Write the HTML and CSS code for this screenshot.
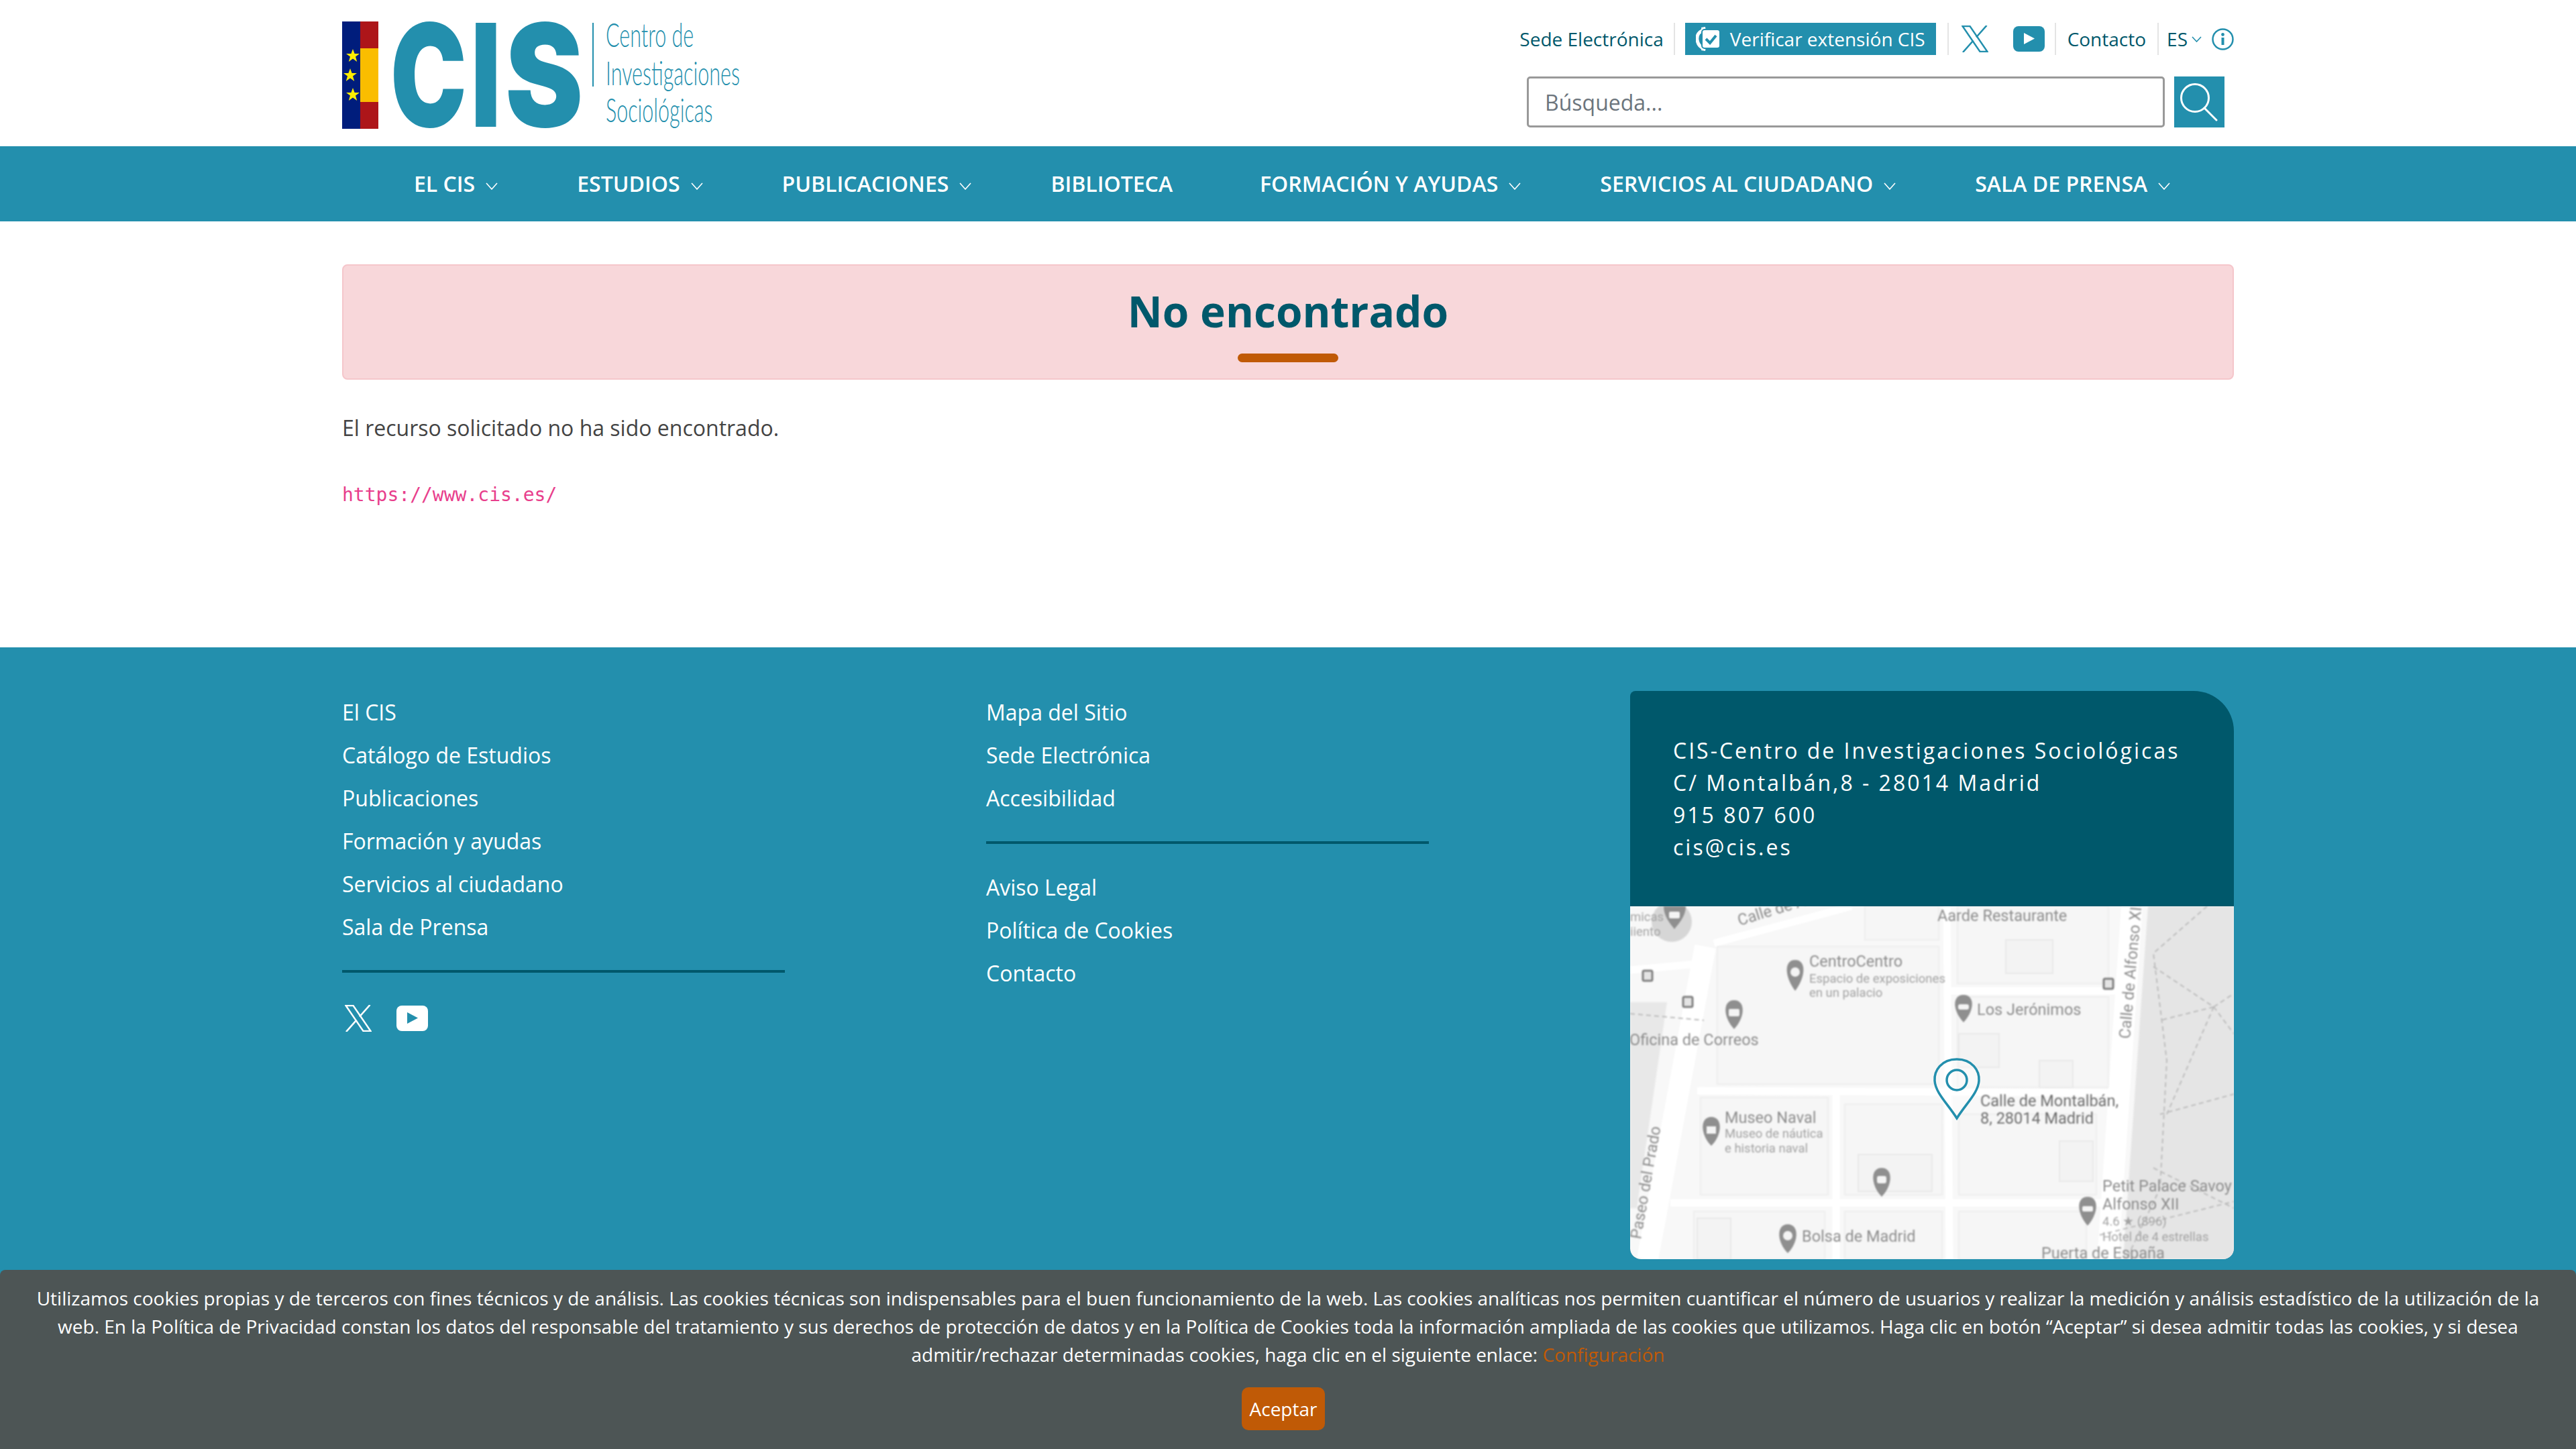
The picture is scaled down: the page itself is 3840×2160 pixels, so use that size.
FILE: index.html
```html
<!DOCTYPE html>
<html lang="es">

<head>
  <meta charset="UTF-8" />
  <title>No encontrado - CIS</title>
  <link rel="stylesheet" href="styles.css">
</head>

<body>
  <header class="top">
    <a class="logo" href="#">
      <svg width="600" height="170" viewBox="0 0 600 170">
        <rect x="0" y="0" width="27" height="160" fill="#001d7c" />
        <rect x="27" y="0" width="27" height="160" fill="#ad1519" />
        <rect x="27" y="40" width="27" height="80" fill="#fabd00" />
        <polygon fill="#ffed00" points="16,41 18.6,48 26,48 20,52.6 22.2,60 16,55.6 9.8,60 12,52.6 6,48 13.4,48" />
        <polygon fill="#ffed00" points="12,70 14.6,77 22,77 16,81.6 18.2,89 12,84.6 5.8,89 8,81.6 2,77 9.4,77" />
        <polygon fill="#ffed00" points="16,99 18.6,106 26,106 20,110.6 22.2,118 16,113.6 9.8,118 12,110.6 6,106 13.4,106" />
        <g class="logo-big">
          <text transform="translate(72 157) scale(0.715 1)">C</text>
          <text transform="translate(192 157) scale(0.72 1)">I</text>
          <text transform="translate(243 157) scale(0.82 1)">S</text>
        </g>
        <rect x="373" y="2" width="2" height="95" fill="#238fad" />
        <g class="logo-name">
          <text transform="translate(393 38) scale(0.61 1)">Centro de</text>
          <text transform="translate(393 95) scale(0.61 1)">Investigaciones</text>
          <text transform="translate(393 150) scale(0.61 1)">Sociológicas</text>
        </g>
      </svg>
    </a>

    <div class="tools">
      <div class="tools-row">
        <a class="tool tool-sede" href="#">Sede Electrónica</a>
        <a class="tool-btn" href="#">
          <svg width="36" height="36" viewBox="0 0 36 36">
            <path class="phone" d="M13 4 C4 7 1 13 2 20 C3 26 7 31 13 33" />
            <path class="phone-ends" d="M8 1 L14 0 L15 7 L9 10 Z M9 26 L15 29 L14 36 L8 35 Z" />
            <rect class="phone-card" x="9" y="4" width="27" height="28" rx="4" />
            <path class="phone-check" d="M15 18 L21 24 L30 13" />
          </svg>
          Verificar extensión CIS
        </a>
        <a class="tool tool-social" href="#">
          <svg class="icon-x" width="40" height="40" viewBox="0 0 40 40">
            <path class="x-body" d="M1.5 1 H12.5 L38.5 39 H27.5 Z" />
            <path class="x-arm" d="M37.5 0 L22 17.5 M17.5 22.5 L2 40" />
          </svg>
          <svg class="icon-yt" width="47" height="38" viewBox="0 0 47 38">
            <rect width="47" height="38" rx="8" />
            <polygon points="16,10 32,18.5 16,27" />
          </svg>
        </a>
        <a class="tool" href="#">Contacto</a>
        <span class="tool tool-lang">
          ES
          <svg class="chev" width="15" height="9" viewBox="0 0 15 9">
            <path d="M1 1 L7.5 8 L14 1" />
          </svg>
          <svg class="icon-info" width="33" height="33" viewBox="0 0 33 33">
            <circle cx="16.5" cy="16.5" r="15" />
            <circle class="dot" cx="16.5" cy="9.5" r="2.4" />
            <path d="M16.5 14 V25" />
          </svg>
        </span>
      </div>
      <form class="search">
        <input type="text" placeholder="Búsqueda...">
        <button type="button" aria-label="Buscar">
          <svg width="62" height="62" viewBox="0 0 62 62">
            <circle cx="25" cy="25" r="20.5" />
            <path d="M39 40 L57 58" />
          </svg>
        </button>
      </form>
    </div>
  </header>

  <nav class="menu">
    <a href="#">EL CIS <svg class="chev" width="18" height="11" viewBox="0 0 18 11"><path d="M1 1 L9 10 L17 1" /></svg></a>
    <a href="#">ESTUDIOS <svg class="chev" width="18" height="11" viewBox="0 0 18 11"><path d="M1 1 L9 10 L17 1" /></svg></a>
    <a href="#">PUBLICACIONES <svg class="chev" width="18" height="11" viewBox="0 0 18 11"><path d="M1 1 L9 10 L17 1" /></svg></a>
    <a class="plain" href="#">BIBLIOTECA</a>
    <a href="#">FORMACIÓN Y AYUDAS <svg class="chev" width="18" height="11" viewBox="0 0 18 11"><path d="M1 1 L9 10 L17 1" /></svg></a>
    <a href="#">SERVICIOS AL CIUDADANO <svg class="chev" width="18" height="11" viewBox="0 0 18 11"><path d="M1 1 L9 10 L17 1" /></svg></a>
    <a href="#">SALA DE PRENSA <svg class="chev" width="18" height="11" viewBox="0 0 18 11"><path d="M1 1 L9 10 L17 1" /></svg></a>
  </nav>

  <main class="content">
    <div class="alert">
      <h1>No encontrado</h1>
    </div>
    <p>El recurso solicitado no ha sido encontrado.</p>
    <code>https://www.cis.es/</code>
  </main>

  <footer class="foot">
    <div class="foot-col">
      <a href="#">El CIS</a>
      <a href="#">Catálogo de Estudios</a>
      <a href="#">Publicaciones</a>
      <a href="#">Formación y ayudas</a>
      <a href="#">Servicios al ciudadano</a>
      <a href="#">Sala de Prensa</a>
      <hr>
      <div class="foot-social">
        <svg class="icon-x" width="40" height="40" viewBox="0 0 40 40">
          <path class="x-body" d="M1.5 1 H12.5 L38.5 39 H27.5 Z" />
          <path class="x-arm" d="M37.5 0 L22 17.5 M17.5 22.5 L2 40" />
        </svg>
        <svg class="icon-yt" width="47" height="38" viewBox="0 0 47 38">
          <rect width="47" height="38" rx="8" />
          <polygon points="16,10 32,18.5 16,27" />
        </svg>
      </div>
    </div>

    <div class="foot-col">
      <a href="#">Mapa del Sitio</a>
      <a href="#">Sede Electrónica</a>
      <a href="#">Accesibilidad</a>
      <hr>
      <a href="#">Aviso Legal</a>
      <a href="#">Política de Cookies</a>
      <a href="#">Contacto</a>
    </div>

    <div class="card">
      <div class="card-text">
        CIS-Centro de Investigaciones Sociológicas<br>
        C/ Montalbán,8 - 28014 Madrid<br>
        915 807 600<br>
        cis@cis.es
      </div>
      <svg class="map" width="900" height="526" viewBox="0 0 900 526">
        <rect width="900" height="526" fill="#f8f8f8" />
        <g class="map-soft">
          <g class="map-blocks">
            <rect x="130" y="60" width="330" height="205" />
            <rect x="488" y="135" width="225" height="135" />
            <rect x="488" y="0" width="225" height="115" />
            <rect x="350" y="0" width="110" height="50" />
            <rect x="105" y="285" width="190" height="145" />
            <rect x="320" y="295" width="145" height="135" />
            <rect x="490" y="310" width="205" height="120" />
            <rect x="95" y="455" width="195" height="71" />
            <rect x="320" y="455" width="145" height="71" />
            <rect x="490" y="455" width="190" height="71" />
          </g>
          <g class="map-darker">
            <rect x="560" y="50" width="70" height="50" />
            <rect x="490" y="190" width="60" height="50" />
            <rect x="610" y="230" width="50" height="40" />
            <rect x="100" y="465" width="50" height="61" />
            <rect x="340" y="370" width="110" height="55" />
            <rect x="640" y="350" width="50" height="60" />
          </g>
          <polygon fill="#e5e5e5" points="772,0 900,0 900,526 735,526" />
          <polygon fill="#e8e8e8" points="0,143 55,143 10,450 0,450" />
          <circle cx="62" cy="23" r="30" fill="#d6d6d6" />
          <g class="map-roads">
            <path class="wide" d="M112 60 L26 526" />
            <path class="wide" d="M748 0 L712 526" />
            <path d="M125 55 L330 0" />
            <path d="M100 275 L730 278" />
            <path d="M307 275 L307 526" />
            <path d="M472 0 L476 526" />
            <path d="M60 442 L725 442" />
            <path d="M472 126 L730 126" />
            <path d="M0 95 L110 85" />
          </g>
          <g class="map-dashed">
            <path d="M860 0 L780 70 L800 230 L790 420 L740 526" />
            <path d="M780 90 L870 150 L900 190" />
            <path d="M870 150 L790 170 M870 150 L900 130 M870 150 L800 310 M790 310 L900 280" />
            <path d="M780 390 L900 450 M700 490 L900 440" />
            <path d="M0 160 L110 170" />
          </g>
          <g class="map-pins">
            <path d="M50 0 H83 C83 15 72 26 66 34 C60 26 50 15 50 0 Z" />
            <path d="M246 80 C263 80 262 105 246 126 C230 105 229 80 246 80 Z" />
            <path d="M155 140 C172 140 172 165 155 183 C138 165 138 140 155 140 Z" />
            <path d="M497 132 C514 132 514 155 497 173 C480 155 480 132 497 132 Z" />
            <path d="M121 314 C138 314 138 340 121 357 C104 340 104 314 121 314 Z" />
            <path d="M375 390 C392 390 392 415 375 433 C358 415 358 390 375 390 Z" />
            <path d="M235 474 C252 474 252 500 235 517 C218 500 218 474 235 474 Z" />
            <path d="M682 433 C699 433 699 457 682 476 C665 457 665 433 682 433 Z" />
          </g>
          <g class="map-pin-holes">
            <circle cx="246" cy="98" r="7" />
            <circle cx="235" cy="491" r="7" />
            <rect x="147" y="153" width="16" height="11" rx="2" />
            <rect x="489" y="146" width="16" height="8" rx="3" />
            <rect x="114" y="328" width="14" height="11" />
            <rect x="368" y="402" width="14" height="11" rx="3" />
            <rect x="674" y="447" width="16" height="8" rx="2" />
            <rect x="58" y="8" width="16" height="10" rx="2" />
          </g>
          <g class="map-metro">
            <rect x="19" y="96" width="14" height="15" rx="2" />
            <rect x="79" y="135" width="14" height="15" rx="2" />
            <rect x="706" y="108" width="14" height="15" rx="2" />
          </g>
          <g class="map-labels">
            <text x="458" y="22">Aarde Restaurante</text>
            <text x="267" y="90">CentroCentro</text>
            <text class="small" x="267" y="114">Espacio de exposiciones</text>
            <text class="small" x="267" y="135">en un palacio</text>
            <text x="517" y="162">Los Jerónimos</text>
            <text x="-1" y="207">Oficina de Correos</text>
            <text x="141" y="323">Museo Naval</text>
            <text class="small" x="141" y="345">Museo de náutica</text>
            <text class="small" x="141" y="367">e historia naval</text>
            <text class="dark" x="522" y="298">Calle de Montalbán,</text>
            <text class="dark" x="522" y="324">8, 28014 Madrid</text>
            <text x="704" y="425">Petit Palace Savoy</text>
            <text x="704" y="452">Alfonso XII</text>
            <text class="small" x="704" y="476">4.6 ★ (896)</text>
            <text class="small" x="704" y="499">Hotel de 4 estrellas</text>
            <text x="256" y="500">Bolsa de Madrid</text>
            <text x="613" y="525">Puerta de España</text>
            <text x="0" y="22" class="small">micas</text>
            <text x="0" y="44" class="small">iiento</text>
            <text transform="translate(163 29) rotate(-17)">Calle de Alcalá</text>
            <text transform="translate(745 198) rotate(-85)">Calle de Alfonso XII</text>
            <text transform="translate(16 497) rotate(-80)">Paseo del Prado</text>
          </g>
        </g>
        <g class="map-mark">
          <path d="M487 228 C510 228 521 245 520 260 C519 278 500 295 487 316 C474 295 455 278 454 260 C453 245 464 228 487 228 Z" />
          <circle cx="487" cy="259" r="15" />
        </g>
      </svg>
    </div>
  </footer>

  <div class="cookies">
    <p>Utilizamos cookies propias y de terceros con fines técnicos y de análisis. Las cookies técnicas son indispensables para el buen funcionamiento de la web. Las cookies analíticas nos permiten cuantificar el número de usuarios y realizar la medición y análisis estadístico de la utilización de la web. En la Política de Privacidad constan los datos del responsable del tratamiento y sus derechos de protección de datos y en la Política de Cookies toda la información ampliada de las cookies que utilizamos. Haga clic en botón “Aceptar” si desea admitir todas las cookies, y si desea admitir/rechazar determinadas cookies, haga clic en el siguiente enlace: <a href="#">Configuración</a></p>
    <button type="button">Aceptar</button>
  </div>
</body>

</html>
```

FILE: styles.css
```css
body {
  margin: 0;
  min-height: 100vh;
  display: flex;
  flex-direction: column;
  font-family: "Open Sans", "Noto Sans", sans-serif;
  font-size: 32px;
  line-height: 1.5;
  color: #444;
  background: #fff;
}

a {
  text-decoration: none;
}

/* cabecera */
.top {
  height: 218px;
  box-sizing: border-box;
  padding: 32px 510px 0;
  display: flex;
  justify-content: space-between;
}

.logo svg {
  display: block;
  overflow: visible;
}

.logo-big text {
  font-family: Inter, "Liberation Sans", sans-serif;
  font-weight: 900;
  font-size: 213px;
  fill: #238fad;
}

.logo-name text {
  font-family: Lato, sans-serif;
  font-weight: 300;
  font-size: 50px;
  fill: #238fad;
}

.tools {
  width: 1065px;
  display: flex;
  flex-direction: column;
  align-items: flex-end;
}

.tools-row {
  height: 48px;
  margin-top: 2px;
  display: flex;
  align-items: center;
  font-size: 28px;
}

.tool {
  height: 48px;
  display: flex;
  align-items: center;
  padding: 0 17px 0 0;
  margin-right: 17px;
  border-right: 2px solid #e4e4e4;
  color: #00586b;
  white-space: nowrap;
}

.tool-sede {
  padding-right: 15px;
  margin-right: 15px;
}

.tool-btn {
  height: 48px;
  display: flex;
  align-items: center;
  gap: 15px;
  padding: 0 16px 0 16px;
  margin-right: 17px;
  background: #238fad;
  color: #fff;
  white-space: nowrap;
}

.phone {
  fill: none;
  stroke: #fff;
  stroke-width: 5;
}

.phone-ends {
  fill: #fff;
}

.phone-card {
  fill: #fff;
  stroke: #238fad;
  stroke-width: 2;
}

.phone-check {
  fill: none;
  stroke: #238fad;
  stroke-width: 4;
}

.tool-social {
  gap: 37px;
  padding-left: 19px;
  padding-right: 15px;
  border-left: 2px solid #e4e4e4;
}

.tool-lang {
  border-right: 0;
  margin-right: 0;
  padding-right: 0;
  margin-left: -5px;
  gap: 6px;
}

.x-body {
  fill: none;
  stroke: #238fad;
  stroke-width: 2.4;
}

.x-arm {
  fill: none;
  stroke: #238fad;
  stroke-width: 2.6;
}

.icon-yt rect {
  fill: #238fad;
}

.icon-yt polygon {
  fill: #fff;
}

.chev path {
  fill: none;
  stroke: currentColor;
  stroke-width: 1.6;
}

.tool-lang .chev path {
  stroke: #238fad;
}

.icon-info {
  margin-left: 9px;
}

.icon-info circle {
  fill: none;
  stroke: #238fad;
  stroke-width: 2.5;
}

.icon-info path {
  fill: none;
  stroke: #238fad;
  stroke-width: 4;
}

.icon-info .dot {
  fill: #238fad;
  stroke: none;
}

.search {
  margin: 32px 14px 0 0;
  display: flex;
  gap: 14px;
}

.search input {
  width: 951px;
  height: 76px;
  box-sizing: border-box;
  padding: 0 24px;
  border: 3px solid #999;
  border-radius: 5px;
  font-family: inherit;
  font-size: 32px;
  color: #444;
}

.search input::placeholder {
  color: #6c757d;
  opacity: 1;
}

.search button {
  width: 75px;
  height: 76px;
  padding: 6px;
  border: 0;
  background: #238fad;
}

.search svg {
  display: block;
  overflow: visible;
  fill: none;
  stroke: #fff;
  stroke-width: 3;
  stroke-linecap: round;
}

/* menu */
.menu {
  height: 112px;
  box-sizing: border-box;
  padding: 0 0 0 617px;
  display: flex;
  align-items: center;
  gap: 118px;
  background: #238fad;
}

.menu a {
  display: flex;
  align-items: center;
  gap: 16px;
  color: #fff;
  font-weight: 600;
  white-space: nowrap;
}

.menu .plain {
  margin-right: 12px;
}

.menu .chev {
  margin-top: 6px;
}

/* contenido */
.content {
  padding: 64px 510px 0;
  height: 635px;
  box-sizing: border-box;
}

.alert {
  height: 172px;
  box-sizing: border-box;
  border: 2px solid #f5c6cb;
  border-radius: 8px;
  background: #f8d7da;
  text-align: center;
}

.alert h1 {
  margin: 0;
  padding-top: 20px;
  font-size: 64px;
  line-height: 96px;
  font-weight: 700;
  color: #00586b;
}

.alert h1::after {
  content: "";
  display: block;
  width: 150px;
  height: 13px;
  margin: 15px auto 0;
  border-radius: 7px;
  background: #c05a06;
}

.content p {
  margin: 48px 0 55px;
}

.content code {
  display: block;
  font-family: "DejaVu Sans Mono", monospace;
  font-size: 28px;
  color: #e83e8c;
}

/* pie */
.foot {
  flex: 1;
  padding: 65px 510px 0;
  display: flex;
  background: #238fad;
}

.foot-col {
  width: 960px;
  display: flex;
  flex-direction: column;
  align-items: flex-start;
}

.foot-col a {
  height: 64px;
  line-height: 64px;
  color: #fff;
}

.foot-col hr {
  width: 660px;
  height: 4px;
  margin: 32px 0 33px;
  border: 0;
  background: #00586b;
}

.foot-social {
  display: flex;
  align-items: center;
  gap: 37px;
  margin: 15px 0 0 4px;
}

.foot-social .x-body,
.foot-social .x-arm {
  stroke: #fff;
}

.foot-social .icon-yt rect {
  fill: #fff;
}

.foot-social .icon-yt polygon {
  fill: #238fad;
}

.card {
  width: 900px;
  height: 847px;
  flex: none;
  border-radius: 8px 60px 16px 16px;
  overflow: hidden;
  background: #00586b;
}

.card-text {
  height: 321px;
  box-sizing: border-box;
  padding: 65px 0 0 64px;
  line-height: 48px;
  letter-spacing: 3px;
  color: #fff;
}

.map {
  display: block;
}

.map-soft {
  filter: blur(0.9px);
}

.map-blocks rect {
  fill: #f6f6f6;
  stroke: #eeeeee;
  stroke-width: 2;
}

.map-darker rect {
  fill: #f3f3f3;
  stroke: #e9e9e9;
  stroke-width: 2;
}

.map-roads path {
  fill: none;
  stroke: #fff;
  stroke-width: 11;
}

.map-roads .wide {
  stroke-width: 32;
}

.map-dashed path {
  fill: none;
  stroke: #bdbdbd;
  stroke-width: 2;
  stroke-dasharray: 7 5;
}

.map-pins path {
  fill: #8f8f8f;
}

.map-pin-holes circle,
.map-pin-holes rect {
  fill: #f4f4f4;
}

.map-metro rect {
  fill: #e4e4e4;
  stroke: #808080;
  stroke-width: 3;
}

.map-labels text {
  font-family: Roboto, sans-serif;
  font-size: 23.5px;
  fill: #8e8e8e;
}

.map-labels .small {
  font-size: 18.5px;
  fill: #a3a3a3;
}

.map-labels .dark {
  font-size: 23.5px;
  fill: #6e6e6e;
}

.map-mark path,
.map-mark circle {
  fill: none;
  stroke: #238fad;
  stroke-width: 3.5;
}

.map-mark path {
  fill: #fff;
  fill-opacity: 0.35;
}

/* aviso de cookies */
.cookies {
  position: fixed;
  left: 0;
  right: 0;
  bottom: 0;
  height: 267px;
  box-sizing: border-box;
  padding: 21px 48px 0;
  border-radius: 8px 8px 0 0;
  background: #4d5555;
  color: #fff;
  font-size: 28px;
  text-align: center;
}

.cookies p {
  margin: 0 0 28px;
}

.cookies a {
  color: #c05a06;
}

.cookies button {
  width: 124px;
  height: 64px;
  padding: 0;
  margin-right: 14px;
  border: 0;
  border-radius: 10px;
  background: #c05a06;
  color: #fff;
  font-family: inherit;
  font-size: 28px;
}
```
